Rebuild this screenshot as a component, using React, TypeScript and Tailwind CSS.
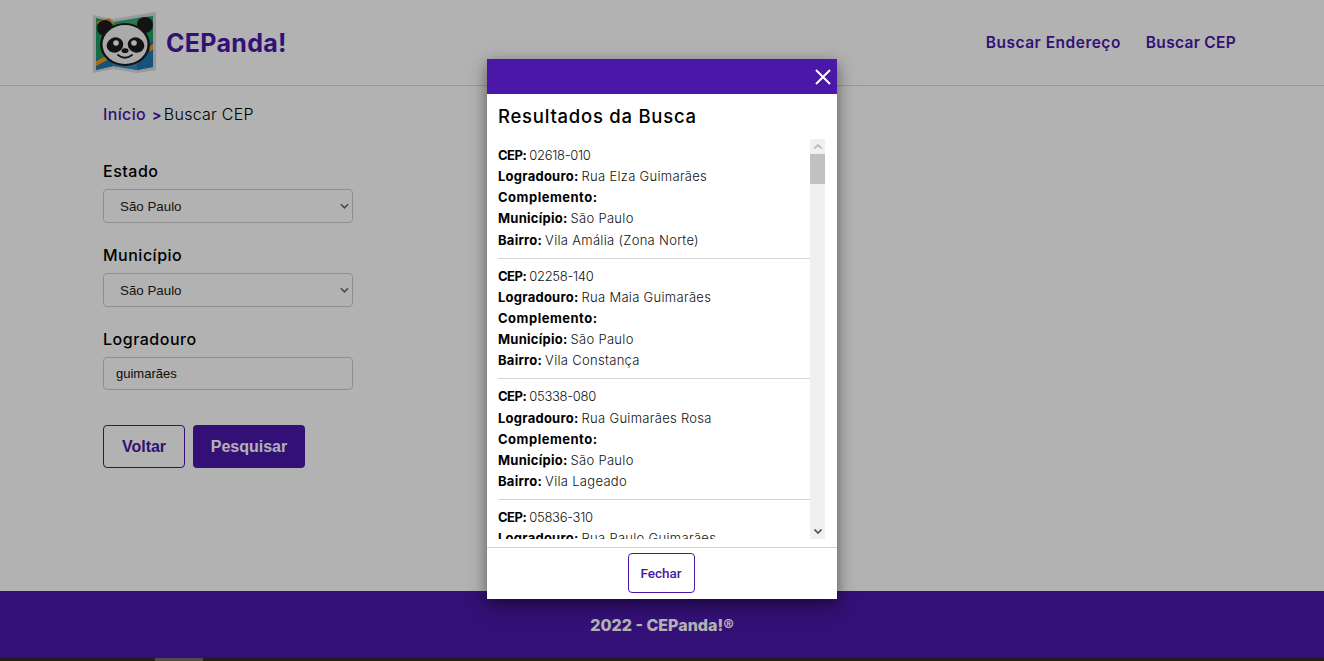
const FONT = "font-['Inter','Noto_Sans',sans-serif]";

interface Resultado {
  cep: string;
  logradouro: string;
  bairro: string;
}

const resultados: Resultado[] = [
  { cep: "02618-010", logradouro: "Rua Elza Guimarães", bairro: "Vila Amália (Zona Norte)" },
  { cep: "02258-140", logradouro: "Rua Maia Guimarães", bairro: "Vila Constança" },
  { cep: "05338-080", logradouro: "Rua Guimarães Rosa", bairro: "Vila Lageado" },
  { cep: "05836-310", logradouro: "Rua Paulo Guimarães", bairro: "Jardim Monte Azul" },
];

// Map + panda logo
const Logo = () => (
  <svg viewBox="0 0 64 64" className="w-16 h-16 shrink-0">
    <path d="M0 4 L20 8 L44 4 L63 1 V59 L44 62 L20 58 L0 62 Z" fill="#d3dadd" />
    <path d="M3 7 L20 11 L44 7 L60 5 V56 L44 59 L20 55 L3 59 Z" fill="#1d9e60" />
    <path d="M3 48 L20 42 L60 30 V56 L44 59 L20 55 L3 59 Z" fill="#1f78b4" />
    <path d="M3 11 L16 7 L22 12 L8 17 Z" fill="#f39c12" />
    <path d="M3 50 L20 41 L22 45 L3 55 Z" fill="#f39c12" />
    <path d="M56 36 L60 33 V38 L57 41 Z" fill="#f39c12" />
    <path d="M20 8 V58 L44 62 V4 Z" fill="#ffffff" opacity="0.12" />
    <circle cx="12" cy="17" r="8" fill="#1c1c1c" />
    <circle cx="52" cy="14" r="8" fill="#1c1c1c" />
    <ellipse cx="32" cy="33.5" rx="25" ry="21.5" fill="#1c1c1c" />
    <ellipse cx="32" cy="33.5" rx="22.5" ry="19.5" fill="#f4f4f4" />
    <ellipse cx="22" cy="34" rx="8.5" ry="7.5" fill="#1c1c1c" transform="rotate(-25 22 34)" />
    <ellipse cx="43" cy="34" rx="8.5" ry="7.5" fill="#1c1c1c" transform="rotate(25 43 34)" />
    <circle cx="23" cy="32" r="2.8" fill="#ffffff" />
    <circle cx="41" cy="32" r="2.8" fill="#ffffff" />
    <ellipse cx="32" cy="39.7" rx="3.5" ry="2.4" fill="#1c1c1c" />
    <path d="M25 44 Q32 49.5 39 44" fill="none" stroke="#1c1c1c" strokeWidth="1.8" strokeLinecap="round" />
  </svg>
);

const Campo = ({ label }: { label: string }) => (
  <div className="flex flex-col">
    <label className="text-[16px] leading-6 font-medium text-black tracking-[0.5px]">{label}</label>
    <div className="relative mt-[6px] w-[250px] h-[34px]">
      <select
        defaultValue="São Paulo"
        className="appearance-none w-full h-full pl-4 pt-[2px] text-[13.33px] text-[#222] font-['Liberation_Sans',sans-serif] bg-white border border-[#ccc] rounded-[4px]"
      >
        <option>São Paulo</option>
      </select>
      <svg viewBox="0 0 10 6" className="absolute right-[4px] top-[14px] w-[9px] h-[6px]" fill="none" stroke="#666" strokeWidth="1.7">
        <path d="M1 1 L5 5 L9 1" />
      </svg>
    </div>
  </div>
);

const Linha = ({
  titulo,
  valor,
  numero,
  track = "tracking-[0.25px]",
}: {
  titulo: string;
  valor?: string;
  numero?: boolean;
  track?: string;
}) => (
  <p className="h-[21.15px] leading-[21.15px] text-[13px] whitespace-nowrap">
    <strong className={`font-bold text-black ${track}`}>{titulo}</strong>
    {valor && (
      <span className={`ml-[3px] font-light text-[#111] ${numero ? "tracking-[-0.3px]" : "tracking-[0.3px]"}`}>
        {valor}
      </span>
    )}
  </p>
);

const Modal = () => (
  <div className="absolute inset-0 bg-black/30">
    <div className="absolute left-[487px] top-[59px] w-[350px] h-[540px] bg-white flex flex-col shadow-[0_5px_15px_rgba(0,0,0,0.5)]">
      <div className="h-[35px] bg-[#4a17a8] flex items-center justify-end pr-[6px]">
        <svg viewBox="0 0 16 16" className="w-4 h-4" fill="none" stroke="white" strokeWidth="2">
          <path d="M1 1 L15 15 M15 1 L1 15" />
        </svg>
      </div>
      <div className="flex-1 min-h-0 pl-[11px] pr-3">
        <h2 className="mt-[9px] h-[27px] leading-[27px] text-[18.5px] font-medium text-black tracking-[0.75px]">
          Resultados da Busca
        </h2>
        <div className="mt-[9px] h-[400px] flex">
          <div className="flex-1 overflow-hidden pt-[6px]">
            {resultados.map((r, i) => (
              <div key={r.cep} className={i < 3 ? "pb-[7px] mb-[7px] border-b-[1.5px] border-[#d4d4d4]" : ""}>
                <Linha titulo="CEP:" valor={r.cep} numero track="tracking-[-0.5px]" />
                <Linha titulo="Logradouro:" valor={r.logradouro} />
                <Linha titulo="Complemento:" track="tracking-[0.5px]" />
                <Linha titulo="Município:" valor="São Paulo" />
                <Linha titulo="Bairro:" valor={r.bairro} />
              </div>
            ))}
          </div>
          {/* scrollbar */}
          <div className="w-[15px] h-full bg-[#f0f0f0] flex flex-col">
            <div className="h-[15px] flex items-center justify-center">
              <svg viewBox="0 0 8 5" className="w-2 h-[5px]" fill="none" stroke="#b5b5b5" strokeWidth="1.6">
                <path d="M0.5 4.5 L4 1 L7.5 4.5" />
              </svg>
            </div>
            <div className="h-[30px] bg-[#c1c1c1]" />
            <div className="flex-1" />
            <div className="h-[15px] flex items-center justify-center">
              <svg viewBox="0 0 8 5" className="w-2 h-[5px]" fill="none" stroke="#505050" strokeWidth="1.6">
                <path d="M0.5 0.5 L4 4 L7.5 0.5" />
              </svg>
            </div>
          </div>
        </div>
      </div>
      <div className="h-[52px] border-t-[1.5px] border-[#d4d4d4] flex justify-center pt-[5px] pr-[2px]">
        <button className="w-[67px] h-10 border border-[#4a17a8] rounded-[4px] bg-white text-[#4a17a8] text-[13.5px] font-medium font-['Roboto',sans-serif]">
          Fechar
        </button>
      </div>
    </div>
  </div>
);

export default function App() {
  return (
    <div className={`relative h-[661px] overflow-hidden flex flex-col bg-white ${FONT}`}>
      <header className="h-[86px] shrink-0 border-b border-[#d9d9d9] pl-[93px] pr-[88px] flex items-center justify-between">
        <div className="flex items-center gap-[9px]">
          <Logo />
          <span className="pt-[2px] text-[25px] font-bold text-[#4a17a8] tracking-[0.3px]">CEPanda!</span>
        </div>
        <nav className="flex gap-[25px] text-[15.5px] font-semibold text-[#4a17a8]">
          <a className="tracking-[0.5px]">Buscar Endereço</a>
          <a className="tracking-[0.3px]">Buscar CEP</a>
        </nav>
      </header>

      <main className="flex-1 pl-[103px]">
        <p className="mt-4 h-6 flex items-center text-[16px] text-black tracking-[0.25px]">
          <span className="font-medium text-[#4a17a8] tracking-[0.35px]">Início</span>
          <span className="ml-[6px] font-bold text-[14px] text-[#4a17a8]">&gt;</span>
          <span className="ml-[1px] pl-[1px] font-light">Buscar CEP</span>
        </p>
        <form className="mt-[33px] flex flex-col gap-5">
          <Campo label="Estado" />
          <Campo label="Município" />
          <div className="flex flex-col">
            <label className="text-[16px] leading-6 font-medium text-black tracking-[0.5px]">Logradouro</label>
            <input
              defaultValue="guimarães"
              className="mt-[6px] w-[250px] h-[33px] px-3 text-[13px] text-[#111] font-['Liberation_Sans',sans-serif] bg-white border border-[#ccc] rounded-[4px]"
            />
          </div>
          <div className="mt-[15px] flex gap-2 font-['Liberation_Sans',sans-serif] text-[16px] font-bold">
            <button type="button" className="w-[82px] h-[43px] border border-[#4a17a8] rounded-[4px] text-[#4a17a8]">
              Voltar
            </button>
            <button type="button" className="w-[112px] h-[43px] rounded-[4px] bg-[#4a17a8] text-white">
              Pesquisar
            </button>
          </div>
        </form>
      </main>

      <footer className="h-[67px] shrink-0 bg-[#4a17a8] flex items-center justify-center text-white text-[16px] font-extrabold">
        2022 - CEPanda!®
      </footer>

      <Modal />

      {/* page scrollbar strip */}
      <div className="relative h-[3px] shrink-0 bg-[#1f1f1f]">
        <div className="absolute left-[155px] top-0 w-12 h-full bg-[#4d4d4d]" />
      </div>
    </div>
  );
}
